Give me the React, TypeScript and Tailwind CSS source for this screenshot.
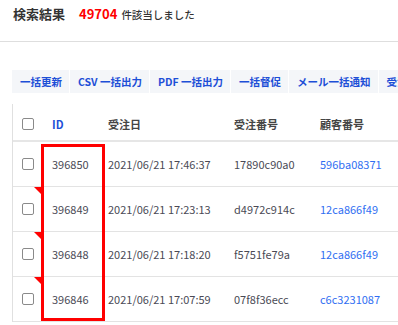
import React from "react";

const font = { fontFamily: '"Noto Sans CJK JP", "Noto Sans", sans-serif' };

const rows = [
  { id: "396850", date: "2021/06/21 17:46:37", no: "17890c90a0", cust: "596ba08371", flag: false },
  { id: "396849", date: "2021/06/21 17:23:13", no: "d4972c914c", cust: "12ca866f49", flag: true },
  { id: "396848", date: "2021/06/21 17:18:20", no: "f5751fe79a", cust: "12ca866f49", flag: true },
  { id: "396846", date: "2021/06/21 17:07:59", no: "07f8f36ecc", cust: "c6c3231087", flag: true },
];

const tools = ["一括更新", "CSV 一括出力", "PDF 一括出力", "一括督促", "メール一括通知", "受注一括"];

function Checkbox() {
  return <div className="w-[12px] h-[12px] rounded-[2px] border border-[#8a8a8a] bg-white" />;
}

export default function App() {
  return (
    <div className="w-[398px] h-[325px] overflow-hidden bg-white relative" style={font}>
      <div className="flex items-baseline pl-[13px] pt-[4px] h-[42px] border-b border-[#dedede]">
        <span className="text-[13px] font-bold text-[#333]">検索結果</span>
        <span className="ml-[14px] text-[13px] font-bold text-[#ff0000]">49704</span>
        <span className="ml-[4px] text-[10.5px] font-medium text-[#333]">件該当しました</span>
      </div>
      <div className="pl-[12px] mt-[28px] flex whitespace-nowrap">
        <div className="flex bg-[#f4f6f9] h-[23px] items-center">
          {tools.map((t, i) => (
            <div
              key={t}
              className={`h-[23px] flex items-center pl-[8px] pr-[7px] text-[10.5px] font-bold text-[#1d4fd7] ${i > 0 ? "border-l border-white" : ""}`}
            >
              {t}
            </div>
          ))}
        </div>
      </div>
      <div className="ml-[12px] mt-[11px] border-l border-[#e0e0e0] w-[400px]">
        <div className="flex h-[38px] pt-[4px] items-center border-b-2 border-[#e6e6e6] text-[11px] font-bold">
          <div className="w-[29px] pl-[9px] flex items-center"><Checkbox /></div>
          <div className="w-[62px] pl-[10px] text-[#1d4fd7]">ID</div>
          <div className="w-[120px] pl-[4px] text-[#444]">受注日</div>
          <div className="w-[86px] pl-[10px] text-[#444]">受注番号</div>
          <div className="pl-[10px] text-[#444]">顧客番号</div>
        </div>
        {rows.map((r) => (
          <div key={r.id} className="flex h-[45px] items-center border-b border-[#e3e3e3] text-[11px] text-[#4a4a55]">
            <div className="w-[29px] h-full pl-[9px] flex items-center relative">
              <Checkbox />
              {r.flag && (
                <div className="absolute right-0 top-0 w-0 h-0 border-t-[8px] border-t-[#ff0000] border-l-[8px] border-l-transparent" />
              )}
            </div>
            <div className="w-[62px] pl-[10px]">{r.id}</div>
            <div className="w-[120px] pl-[4px]">{r.date}</div>
            <div className="w-[86px] pl-[10px]">{r.no}</div>
            <div className="pl-[10px] text-[#2f6ef2]">{r.cust}</div>
          </div>
        ))}
      </div>
      <div className="absolute left-[41px] top-[144px] w-[64px] h-[177px] border-[3px] border-[#ff0000]" />
    </div>
  );
}
